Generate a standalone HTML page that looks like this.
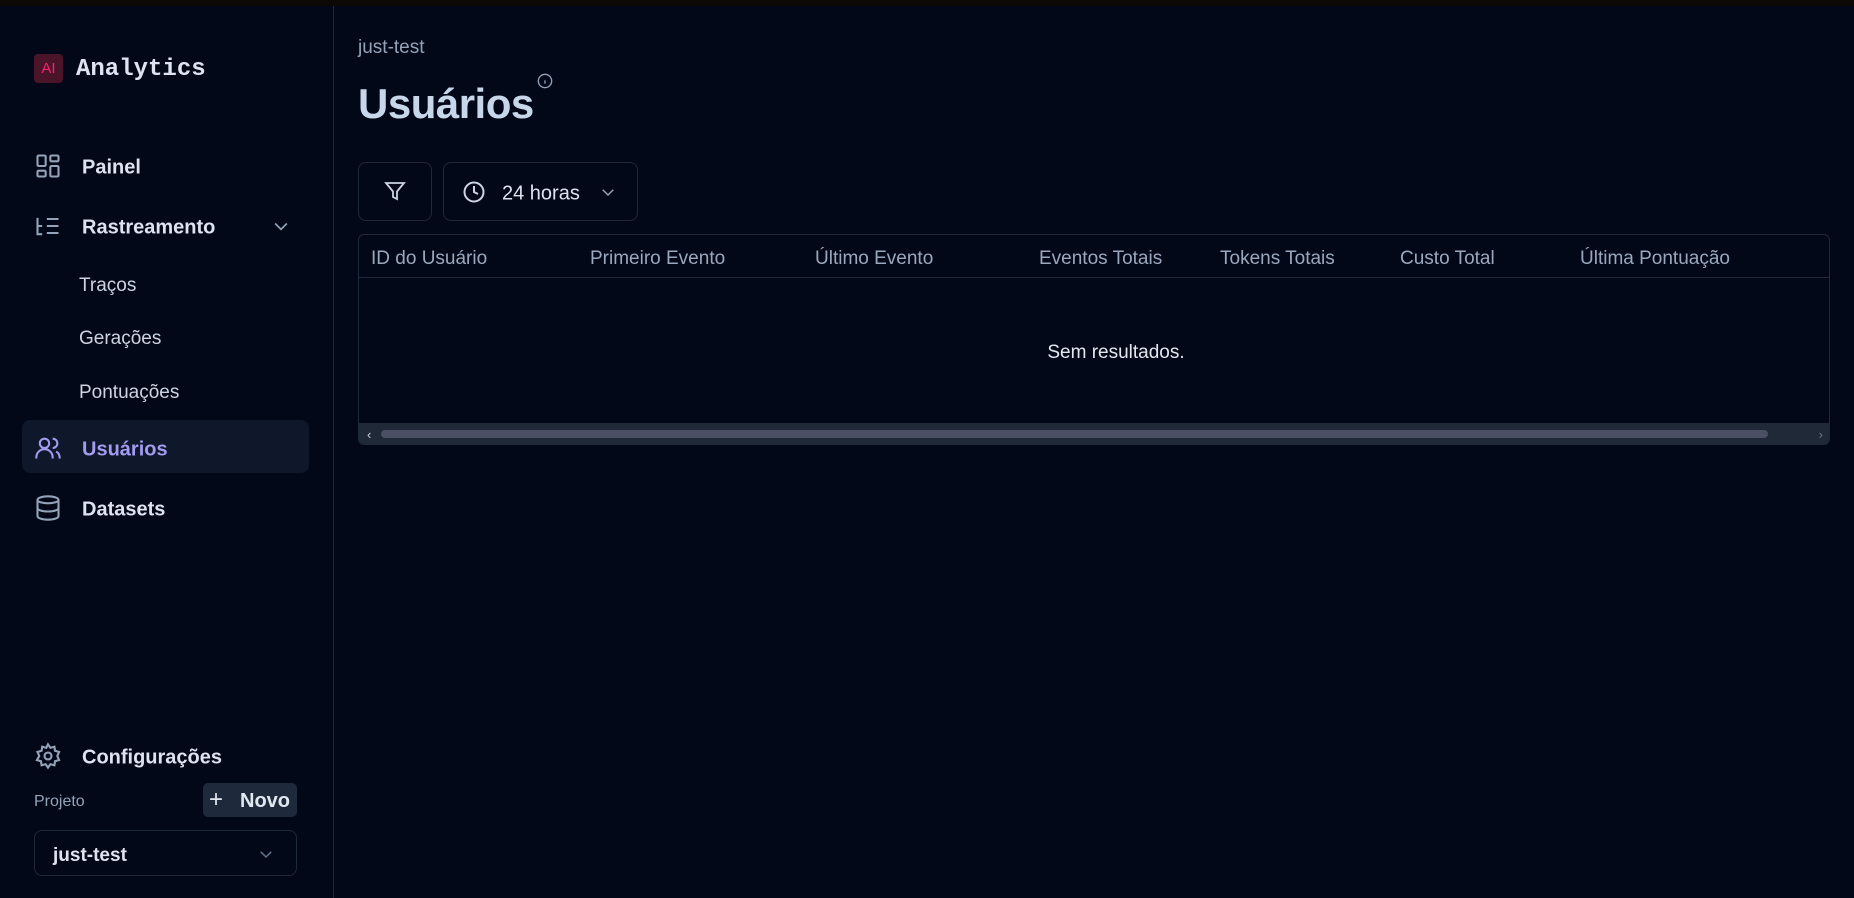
<!DOCTYPE html>
<html><head><meta charset="utf-8"><style>
*{box-sizing:border-box;margin:0;padding:0}
body{width:1854px;height:898px;background:#020817;font-family:"Liberation Sans",sans-serif;color:#e2e8f0;position:relative;overflow:hidden}
.top{position:absolute;left:0;top:0;width:1854px;height:6px;background:#0b0806}
.side{position:absolute;left:0;top:6px;width:334px;height:892px;border-right:1px solid #1e293b}
.abs{position:absolute}
.nav{position:absolute;left:82px;font-size:20px;font-weight:bold;color:#dbe4f0;transform:translateY(-50%);margin-top:2px}
.sub{position:absolute;left:79px;font-size:19px;color:#cbd5e1;transform:translateY(-50%);margin-top:2px}
.ic{position:absolute;left:34px;width:28px;height:28px;transform:translateY(-50%)}
.th{position:absolute;top:259px;transform:translateY(-50%);font-size:19px;color:#9aa8bd}
</style></head><body>
<div class="top"></div>
<div class="side"></div>
<div class="abs" style="left:34px;top:54px;width:29px;height:29px;background:#4a1529;border-radius:4px;color:#ff1f6d;font-size:15px;line-height:29px;text-align:center">AI</div>
<div class="abs" style="left:76px;top:55px;font-family:'Liberation Mono',monospace;font-weight:bold;font-size:24px;line-height:29px;color:#dbe4f0">Analytics</div>

<svg class="ic" style="top:166px" viewBox="0 0 24 24" fill="none" stroke="#94a3b8" stroke-width="1.8"><rect x="3" y="3" width="7" height="9" rx="1"/><rect x="14" y="3" width="7" height="5" rx="1"/><rect x="14" y="12" width="7" height="9" rx="1"/><rect x="3" y="16" width="7" height="5" rx="1"/></svg>
<div class="nav" style="top:166px">Painel</div>
<svg class="ic" style="top:226px" viewBox="0 0 24 24" fill="none" stroke="#94a3b8" stroke-width="1.8"><path d="M3 5v14h4M3 12h4M11 6h10M11 12h10M11 18h10"/></svg>
<div class="nav" style="top:226px">Rastreamento</div>
<svg class="abs" style="left:271px;top:216px" width="20" height="20" viewBox="0 0 24 24" fill="none" stroke="#94a3b8" stroke-width="2"><path d="M5 9l7 7 7-7"/></svg>
<div class="sub" style="top:284px">Traços</div>
<div class="sub" style="top:337px">Gerações</div>
<div class="sub" style="top:391px">Pontuações</div>
<div class="abs" style="left:22px;top:420px;width:287px;height:53px;background:#0f172a;border-radius:8px"></div>
<svg class="ic" style="top:448px" viewBox="0 0 24 24" fill="none" stroke="#a29bef" stroke-width="1.8"><circle cx="9" cy="8" r="4"/><path d="M2 21v-1a7 7 0 0 1 14 0v1M16 4a4 4 0 0 1 0 8M19 15a6 6 0 0 1 3 5v1"/></svg>
<div class="nav" style="top:448px;color:#a29bef">Usuários</div>
<svg class="ic" style="top:508px" viewBox="0 0 24 24" fill="none" stroke="#94a3b8" stroke-width="1.8"><ellipse cx="12" cy="5" rx="9" ry="3"/><path d="M3 5v14c0 1.7 4 3 9 3s9-1.3 9-3V5M3 12c0 1.7 4 3 9 3s9-1.3 9-3"/></svg>
<div class="nav" style="top:508px">Datasets</div>

<svg class="ic" style="top:756px" viewBox="0 0 24 24" fill="none" stroke="#94a3b8" stroke-width="1.8"><circle cx="12" cy="12" r="3"/><path d="M12 2l2 3 3.5-1 .5 3.5 3.5 1-1.5 3.5 1.5 3.5-3.5 1-.5 3.5-3.5-1-2 3-2-3-3.5 1-.5-3.5-3.5-1L4.5 12 3 8.5l3.5-1L7 4l3.5 1z"/></svg>
<div class="nav" style="top:756px">Configurações</div>
<div class="abs" style="left:34px;top:802px;transform:translateY(-50%);font-size:16px;color:#94a3b8">Projeto</div>
<div class="abs" style="left:203px;top:783px;width:94px;height:34px;background:#1e293b;border-radius:5px;font-size:20px;font-weight:bold;line-height:36px;color:#e2e8f0"><span style="font-weight:normal;font-size:24px;position:absolute;left:6px;top:-1px">+</span><span style="position:absolute;left:37px">Novo</span></div>
<div class="abs" style="left:34px;top:830px;width:263px;height:46px;border:1px solid #1e293b;border-radius:8px"></div>
<div class="abs" style="left:53px;top:856px;transform:translateY(-50%);font-size:19px;font-weight:bold;color:#dbe4f0">just-test</div>
<svg class="abs" style="left:257px;top:845px" width="18" height="18" viewBox="0 0 24 24" fill="none" stroke="#64748b" stroke-width="2"><path d="M5 9l7 7 7-7"/></svg>

<div class="abs" style="left:358px;top:48px;transform:translateY(-50%);font-size:19px;color:#94a3b8">just-test</div>
<div class="abs" style="left:358px;top:104px;transform:translateY(-50%);font-size:42px;font-weight:bold;color:#c8d6ea;letter-spacing:-0.5px">Usuários</div>
<svg class="abs" style="left:537px;top:73px" width="16" height="16" viewBox="0 0 24 24" fill="none" stroke="#94a3b8" stroke-width="2"><circle cx="12" cy="12" r="10"/><path d="M12 16v-5M12 8h0"/></svg>

<div class="abs" style="left:358px;top:162px;width:74px;height:59px;border:1px solid #1e293b;border-radius:8px"></div>
<svg class="abs" style="left:383px;top:179px" width="24" height="24" viewBox="0 0 24 24" fill="none" stroke="#cbd5e1" stroke-width="1.8"><path d="M3 4h18l-7 8.5V20l-4-2v-5.5z"/></svg>
<div class="abs" style="left:443px;top:162px;width:195px;height:59px;border:1px solid #1e293b;border-radius:8px"></div>
<svg class="abs" style="left:462px;top:180px" width="24" height="24" viewBox="0 0 24 24" fill="none" stroke="#cbd5e1" stroke-width="2"><circle cx="12" cy="12" r="9.5"/><path d="M12 6v6l4 2"/></svg>
<div class="abs" style="left:502px;top:194px;transform:translateY(-50%);font-size:20px;color:#dbe4f0">24 horas</div>
<svg class="abs" style="left:599px;top:183px" width="18" height="18" viewBox="0 0 24 24" fill="none" stroke="#94a3b8" stroke-width="2"><path d="M5 9l7 7 7-7"/></svg>

<div class="abs" style="left:358px;top:234px;width:1472px;height:211px;border:1px solid #1e293b;border-radius:6px;overflow:hidden">
 <div style="position:absolute;left:0;top:42px;width:100%;height:1px;background:#1e293b"></div>
 <div style="position:absolute;left:0;bottom:0;width:100%;height:21px;background:#1f2937"></div>
 <div style="position:absolute;left:22px;bottom:6px;width:1387px;height:8px;background:#4b5065;border-radius:4px"></div>
 <div style="position:absolute;left:8px;bottom:2px;font-size:13px;color:#cbd5e1">‹</div>
 <div style="position:absolute;right:6px;bottom:2px;font-size:13px;color:#64748b">›</div>
</div>
<div class="th" style="left:371px">ID do Usuário</div>
<div class="th" style="left:590px">Primeiro Evento</div>
<div class="th" style="left:815px">Último Evento</div>
<div class="th" style="left:1039px">Eventos Totais</div>
<div class="th" style="left:1220px">Tokens Totais</div>
<div class="th" style="left:1400px">Custo Total</div>
<div class="th" style="left:1580px">Última Pontuação</div>
<div class="abs" style="left:1116px;top:353px;transform:translate(-50%,-50%);font-size:19px;color:#e2e8f0">Sem resultados.</div>
</body></html>
